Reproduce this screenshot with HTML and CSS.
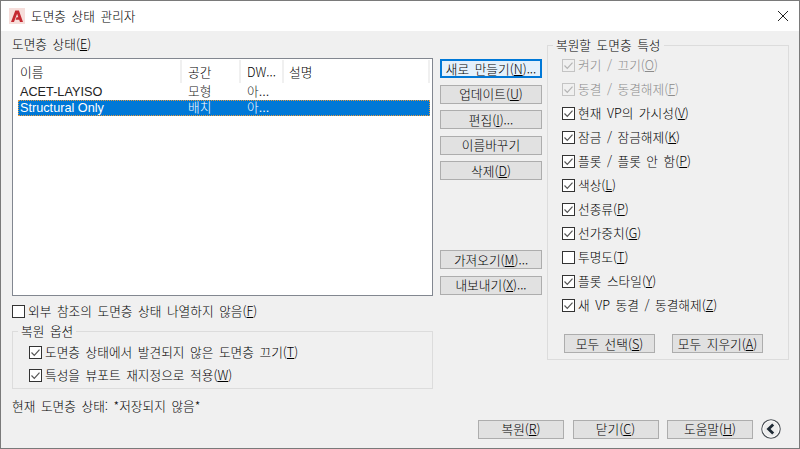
FILE: index.html
```html
<!DOCTYPE html>
<html lang="ko">
<head>
<meta charset="utf-8">
<title>도면층 상태 관리자</title>
<link rel="stylesheet" href="styles.css">
</head>
<body>
<svg class="defs" width="0" height="0">
  <symbol id="cb-on" viewBox="0 0 13 13"><rect x=".5" y=".5" width="12" height="12" fill="#fff" stroke="#333"/><path d="M2.5 6.5l2.8 2.8 5.2-5.6" fill="none" stroke="#555" stroke-width="1.2"/></symbol>
  <symbol id="cb-off" viewBox="0 0 13 13"><rect x=".5" y=".5" width="12" height="12" fill="#fff" stroke="#333"/></symbol>
  <symbol id="cb-dis" viewBox="0 0 13 13"><rect x=".5" y=".5" width="12" height="12" fill="#f0f0f0" stroke="#c4c4c4"/><path d="M2.5 6.5l2.8 2.8 5.2-5.6" fill="none" stroke="#b4b4b4" stroke-width="1.2"/></symbol>
</svg>
<div class="window">
  <header class="titlebar">
    <svg class="app-icon" width="16" height="16" viewBox="0 0 16 16"><rect width="16" height="16" fill="#f6dedb"/><path d="M2 14L6.3 2.5h3.6L14 14h-3l-.8-2.3H6.6l1-2.4h1.7L8.1 5.8 5 14z" fill="#c42a32"/></svg>
    <span class="title">도면층 상태 관리자</span>
    <svg class="close" width="12" height="12" viewBox="0 0 12 12"><path d="M1 1l10 10M11 1L1 11" stroke="#222" stroke-width="1" fill="none"/></svg>
  </header>
  <main class="content">
    <section class="left">
      <div class="list-label">도면층 상태(<u>E</u>)</div>
      <div class="listbox">
        <div class="list-head">
          <span class="col c1">이름</span><span class="col c2">공간</span><span class="col c3">DW...</span><span class="col c4">설명</span>
        </div>
        <div class="list-row"><span class="col c1">ACET-LAYISO</span><span class="col c2">모형</span><span class="col c3">아...</span></div>
        <div class="list-row selected"><span class="col c1">Structural Only</span><span class="col c2">배치</span><span class="col c3">아...</span></div>
      </div>
      <label class="check ext"><svg class="box"><use href="#cb-off"/></svg>외부 참조의 도면층 상태 나열하지 않음(<u>F</u>)</label>
      <fieldset class="group options">
        <legend>복원 옵션</legend>
        <label class="check"><svg class="box"><use href="#cb-on"/></svg>도면층 상태에서 발견되지 않은 도면층 끄기(<u>T</u>)</label>
        <label class="check"><svg class="box"><use href="#cb-on"/></svg>특성을 뷰포트 재지정으로 적용(<u>W</u>)</label>
      </fieldset>
      <div class="status">현재 도면층 상태: *저장되지 않음*</div>
    </section>
    <section class="actions">
      <button class="btn default">새로 만들기(<u>N</u>)...</button>
      <button class="btn">업데이트(<u>U</u>)</button>
      <button class="btn">편집(<u>I</u>)...</button>
      <button class="btn">이름바꾸기</button>
      <button class="btn">삭제(<u>D</u>)</button>
      <div class="spacer"></div>
      <button class="btn">가져오기(<u>M</u>)...</button>
      <button class="btn">내보내기(<u>X</u>)...</button>
    </section>
    <fieldset class="group props">
      <legend>복원할 도면층 특성</legend>
      <label class="check disabled"><svg class="box"><use href="#cb-dis"/></svg>켜기 / 끄기(<u>O</u>)</label>
      <label class="check disabled"><svg class="box"><use href="#cb-dis"/></svg>동결 / 동결해제(<u>F</u>)</label>
      <label class="check"><svg class="box"><use href="#cb-on"/></svg>현재 VP의 가시성(<u>V</u>)</label>
      <label class="check"><svg class="box"><use href="#cb-on"/></svg>잠금 / 잠금해제(<u>K</u>)</label>
      <label class="check"><svg class="box"><use href="#cb-on"/></svg>플롯 / 플롯 안 함(<u>P</u>)</label>
      <label class="check"><svg class="box"><use href="#cb-on"/></svg>색상(<u>L</u>)</label>
      <label class="check"><svg class="box"><use href="#cb-on"/></svg>선종류(<u>P</u>)</label>
      <label class="check"><svg class="box"><use href="#cb-on"/></svg>선가중치(<u>G</u>)</label>
      <label class="check"><svg class="box"><use href="#cb-off"/></svg>투명도(<u>T</u>)</label>
      <label class="check"><svg class="box"><use href="#cb-on"/></svg>플롯 스타일(<u>Y</u>)</label>
      <label class="check"><svg class="box"><use href="#cb-on"/></svg>새 VP 동결 / 동결해제(<u>Z</u>)</label>
      <div class="prop-btns">
        <button class="btn">모두 선택(<u>S</u>)</button>
        <button class="btn">모두 지우기(<u>A</u>)</button>
      </div>
    </fieldset>
  </main>
  <footer class="footer">
    <button class="btn">복원(<u>R</u>)</button>
    <button class="btn">닫기(<u>C</u>)</button>
    <button class="btn">도움말(<u>H</u>)</button>
    <svg class="back" width="20" height="20" viewBox="0 0 20 20"><circle cx="10" cy="10" r="9.2" fill="#ececec" stroke="#4a4f55" stroke-width="1.1"/><circle cx="10" cy="10" r="8" fill="none" stroke="#fff" stroke-width=".8"/><path d="M12.2 5.4L7.5 10l4.7 4.6" fill="none" stroke="#1f2a35" stroke-width="2.8"/></svg>
  </footer>
</div>
</body>
</html>
```
FILE: styles.css
```css
* { box-sizing: border-box; }
html, body { margin: 0; padding: 0; }
body {
  width: 800px;
  height: 449px;
  overflow: hidden;
  font-family: "Noto Sans CJK KR", "Liberation Sans", sans-serif;
  font-size: 12.7px;
  font-weight: 300;
  word-spacing: 2px;
  line-height: 16px;
  color: #000;
}
.defs { position: absolute; }
u { text-underline-offset: 1px; }
.window {
  width: 800px;
  height: 449px;
  background: #f0f0f0;
  border: 1px solid #7a7a7a;
  display: flex;
  flex-direction: column;
}
.titlebar {
  height: 30px;
  flex: none;
  background: #fff;
  display: flex;
  align-items: center;
  padding: 0 10px 0 8px;
}
.app-icon { flex: none; }
.title { margin-left: 6px; flex: 1; }
.content {
  flex: none;
  height: 387px;
  display: flex;
  padding-left: 11px;
}
.left { width: 421px; flex: none; display: flex; flex-direction: column; }
.list-label { height: 16px; margin-top: 5px; }
.listbox {
  height: 238px;
  margin-top: 6px;
  background: #fff;
  border: 1px solid #828790;
  padding: 1px 2px 0 5px;
}
.list-head { height: 23px; display: flex; align-items: center; }
.col {
  display: block;
  flex: none;
  white-space: nowrap;
  overflow: hidden;
}
.c1 { width: 164px; padding-left: 2px; }
.c2 { width: 59px; padding-left: 6px; }
.c3 { width: 43px; padding-left: 6px; }
.c4 { width: 146px; padding-left: 5px; }
.list-head .col {
  height: 23px;
  line-height: 23px;
  border-right: 2px solid #f0f0f0;
}
.list-row {
  height: 17px;
  display: flex;
  align-items: center;
  border: 1px solid transparent;
  color: #222;
}
.list-row .col { font-family: "Liberation Sans", "Noto Sans CJK KR", sans-serif; word-spacing: 0; }
.list-row .c1 { padding-left: 1px; }
.list-row .c2 { padding-left: 5px; }
.list-row .c3 { padding-left: 5px; }
.list-row.selected {
  height: 16px;
  background: #0078d7;
  color: #fff;
  border: 1px dotted #e89a3c;
}
.check {
  display: flex;
  align-items: center;
  height: 16px;
  white-space: nowrap;
}
.box { width: 13px; height: 13px; flex: none; margin-right: 3px; }
.disabled { color: #8c8c8c; }
.ext { margin-top: 7px; }
.group {
  margin: 0;
  padding: 0;
  border: 1px solid #dcdcdc;
  min-width: 0;
}
.group legend { padding: 0 3px; line-height: 14px; }
.options {
  height: 65px;
  margin-top: 5px;
  padding: 6px 0 0 16px;
  display: flex;
  flex-direction: column;
  gap: 7px;
}
.options legend { margin-left: -11px; }
.status { margin-top: 9px; }
.actions {
  width: 102px;
  flex: none;
  margin-left: 7px;
  padding-top: 28px;
  display: flex;
  flex-direction: column;
  gap: 6.5px;
}
.spacer { height: 57px; }
.btn {
  height: 19px;
  padding: 0;
  background: #e1e1e1;
  border: 1px solid #adadad;
  font: inherit;
  word-spacing: inherit;
  line-height: 16px;
  color: #000;
  white-space: nowrap;
  flex: none;
}
.btn.default { background: #e5f1fb; border: 2px solid #0078d7; }
.props {
  width: 242px;
  height: 322px;
  flex: none;
  margin-left: 5px;
  margin-top: 7px;
  padding: 5px 0 0 14px;
  display: flex;
  flex-direction: column;
  gap: 8px;
}
.props legend { margin-left: -9px; }
.prop-btns { display: flex; gap: 17px; margin: 13px 0 0 2px; }
.prop-btns .btn { width: 91px; }
.footer {
  flex: none;
  display: flex;
  align-items: center;
  padding: 1px 0 0 477px;
  gap: 8.5px;
}
.footer .btn { width: 86px; }
.back { margin-left: -1px; }
```
